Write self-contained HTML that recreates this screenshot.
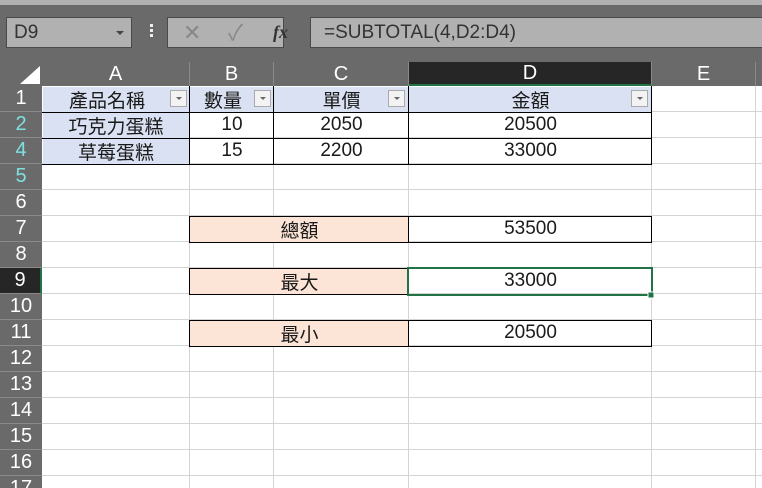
<!DOCTYPE html>
<html><head><meta charset="utf-8"><style>
*{margin:0;padding:0;box-sizing:border-box}
html,body{width:762px;height:488px;overflow:hidden}
body{background:#fff;position:relative;font-family:"Liberation Sans","Noto Sans CJK TC",sans-serif}
.a{position:absolute}
.t{position:absolute;display:flex;align-items:center;justify-content:center;font-size:19px;color:#1a1a1a}
.rh{position:absolute;left:0;width:42px;height:26px;background:#6a6a6a;color:#fff;font-size:20px;display:flex;align-items:center;justify-content:center;border-bottom:1px solid #8a8a8a}
.ch{position:absolute;top:62px;height:24px;color:#fff;font-size:20px;display:flex;align-items:center;justify-content:center;background:#6a6a6a;border-right:1px solid #8a8a8a}
.dd{position:absolute;width:17px;height:17px;background:#f3f3f3;border:1px solid #aaa;display:flex;align-items:center;justify-content:center}
.dd:after{content:"";border-left:3px solid transparent;border-right:3px solid transparent;border-top:3px solid #666}
</style></head><body>
<div class="a" style="left:0;top:0;width:762px;height:5px;background:#b1b1b1"></div>
<div class="a" style="left:0;top:5px;width:762px;height:57px;background:#6a6a6a"></div>
<div class="a" style="left:6px;top:17px;width:126px;height:31px;background:#b1b1b1;border:1px solid #4a4a4a;font-size:19px;color:#333;padding-left:7px;line-height:29px">D9</div>
<div class="a" style="left:116px;top:31px;border-left:4px solid transparent;border-right:4px solid transparent;border-top:4px solid #444"></div>
<div class="a" style="left:150px;top:24px;width:3px;height:3px;background:#eee;box-shadow:0 5px 0 #eee,0 10px 0 #eee"></div>
<div class="a" style="left:167px;top:17px;width:117px;height:31px;background:#b1b1b1;border:1px solid #4a4a4a"></div>
<div class="a" style="left:183px;top:18px;font-size:22px;color:#888;line-height:29px">✕</div>
<div class="a" style="left:228px;top:18px;font-size:22px;color:#888;line-height:29px">✓</div>
<div class="a" style="left:273px;top:18px;font-size:18px;color:#333;font-style:italic;font-weight:bold;font-family:'Liberation Serif',serif;line-height:29px">fx</div>
<div class="a" style="left:310px;top:17px;width:460px;height:31px;background:#b1b1b1;border:1px solid #4a4a4a;font-size:19px;color:#333;padding-left:13px;line-height:29px">=SUBTOTAL(4,D2:D4)</div>

<div class="a" style="left:0;top:62px;width:762px;height:24px;background:#6a6a6a"></div>
<div class="a" style="left:20px;top:66px;width:0;height:0;border-left:20px solid transparent;border-bottom:18px solid #fff"></div>
<div class="ch" style="left:42px;width:148px">A</div>
<div class="ch" style="left:190px;width:84px">B</div>
<div class="ch" style="left:274px;width:135px">C</div>
<div class="ch" style="left:409px;width:243px;background:#262626;border-bottom:2px solid #217346">D</div>
<div class="ch" style="left:652px;width:104px">E</div>

<svg class="a" style="left:0;top:86px" width="762" height="402">
<g stroke="#d4d4d4" stroke-width="1">
<line x1="189.5" y1="0" x2="189.5" y2="402"/><line x1="273.5" y1="0" x2="273.5" y2="402"/><line x1="408.5" y1="0" x2="408.5" y2="402"/><line x1="651.5" y1="0" x2="651.5" y2="402"/><line x1="755.5" y1="0" x2="755.5" y2="402"/>
<line x1="42" y1="25.5" x2="762" y2="25.5"/><line x1="42" y1="51.5" x2="762" y2="51.5"/><line x1="42" y1="77.5" x2="762" y2="77.5"/><line x1="42" y1="103.5" x2="762" y2="103.5"/><line x1="42" y1="129.5" x2="762" y2="129.5"/><line x1="42" y1="155.5" x2="762" y2="155.5"/><line x1="42" y1="181.5" x2="762" y2="181.5"/><line x1="42" y1="207.5" x2="762" y2="207.5"/><line x1="42" y1="233.5" x2="762" y2="233.5"/><line x1="42" y1="259.5" x2="762" y2="259.5"/><line x1="42" y1="285.5" x2="762" y2="285.5"/><line x1="42" y1="311.5" x2="762" y2="311.5"/><line x1="42" y1="337.5" x2="762" y2="337.5"/><line x1="42" y1="363.5" x2="762" y2="363.5"/><line x1="42" y1="389.5" x2="762" y2="389.5"/>
</g></svg>

<div class="rh" style="top:86px">1</div>
<div class="rh" style="top:112px;color:#7fe0e0">2</div>
<div class="rh" style="top:138px;color:#7fe0e0">4</div>
<div class="rh" style="top:164px;color:#7fe0e0">5</div>
<div class="rh" style="top:190px">6</div>
<div class="rh" style="top:216px">7</div>
<div class="rh" style="top:242px">8</div>
<div class="rh" style="top:268px;background:#262626;border-right:2px solid #217346">9</div>
<div class="rh" style="top:294px">10</div>
<div class="rh" style="top:320px">11</div>
<div class="rh" style="top:346px">12</div>
<div class="rh" style="top:372px">13</div>
<div class="rh" style="top:398px">14</div>
<div class="rh" style="top:424px">15</div>
<div class="rh" style="top:450px">16</div>
<div class="rh" style="top:476px">17</div>

<div class="a" style="left:43px;top:87px;width:608px;height:25px;background:#d9e1f2"></div>
<div class="a" style="left:43px;top:112px;width:146px;height:52px;background:#d9e1f2"></div>
<div class="a" style="left:190px;top:216px;width:218px;height:26px;background:#fce4d6"></div>
<div class="a" style="left:190px;top:268px;width:218px;height:26px;background:#fce4d6"></div>
<div class="a" style="left:190px;top:320px;width:218px;height:26px;background:#fce4d6"></div>

<svg class="a" style="left:0;top:0" width="762" height="488">
<g stroke="#000" stroke-width="1" fill="none">
<line x1="42" y1="112.5" x2="652" y2="112.5"/><line x1="42" y1="138.5" x2="652" y2="138.5"/><line x1="42" y1="164.5" x2="652" y2="164.5"/>
<line x1="189.5" y1="86" x2="189.5" y2="165"/><line x1="273.5" y1="86" x2="273.5" y2="165"/><line x1="408.5" y1="86" x2="408.5" y2="165"/><line x1="651.5" y1="86" x2="651.5" y2="165"/>
<rect x="189.5" y="216.5" width="462" height="26"/><line x1="408.5" y1="216" x2="408.5" y2="243"/>
<rect x="189.5" y="268.5" width="462" height="26"/>
<rect x="189.5" y="320.5" width="462" height="26"/><line x1="408.5" y1="320" x2="408.5" y2="347"/>
</g>
<rect x="408" y="268" width="244" height="27" fill="none" stroke="#217346" stroke-width="2"/>
<rect x="648" y="292" width="6" height="6" fill="#217346" stroke="#fff" stroke-width="1"/>
</svg>

<div class="t" style="left:42px;top:86px;width:130px;height:26px">產品名稱</div>
<div class="dd" style="left:170px;top:90px"></div>
<div class="t" style="left:190px;top:86px;width:66px;height:26px">數量</div>
<div class="dd" style="left:254px;top:90px"></div>
<div class="t" style="left:274px;top:86px;width:135px;height:26px">單價</div>
<div class="dd" style="left:388px;top:90px"></div>
<div class="t" style="left:409px;top:86px;width:243px;height:26px">金額</div>
<div class="dd" style="left:631px;top:90px"></div>

<div class="t" style="left:42px;top:112px;width:148px;height:26px">巧克力蛋糕</div>
<div class="t" style="left:190px;top:112px;width:84px;height:26px">10</div>
<div class="t" style="left:274px;top:112px;width:135px;height:26px">2050</div>
<div class="t" style="left:409px;top:112px;width:243px;height:26px">20500</div>
<div class="t" style="left:42px;top:138px;width:148px;height:26px">草莓蛋糕</div>
<div class="t" style="left:190px;top:138px;width:84px;height:26px">15</div>
<div class="t" style="left:274px;top:138px;width:135px;height:26px">2200</div>
<div class="t" style="left:409px;top:138px;width:243px;height:26px">33000</div>

<div class="t" style="left:190px;top:216px;width:219px;height:26px">總額</div>
<div class="t" style="left:409px;top:216px;width:243px;height:26px">53500</div>
<div class="t" style="left:190px;top:268px;width:219px;height:26px">最大</div>
<div class="t" style="left:409px;top:268px;width:243px;height:26px">33000</div>
<div class="t" style="left:190px;top:320px;width:219px;height:26px">最小</div>
<div class="t" style="left:409px;top:320px;width:243px;height:26px">20500</div>
</body></html>
